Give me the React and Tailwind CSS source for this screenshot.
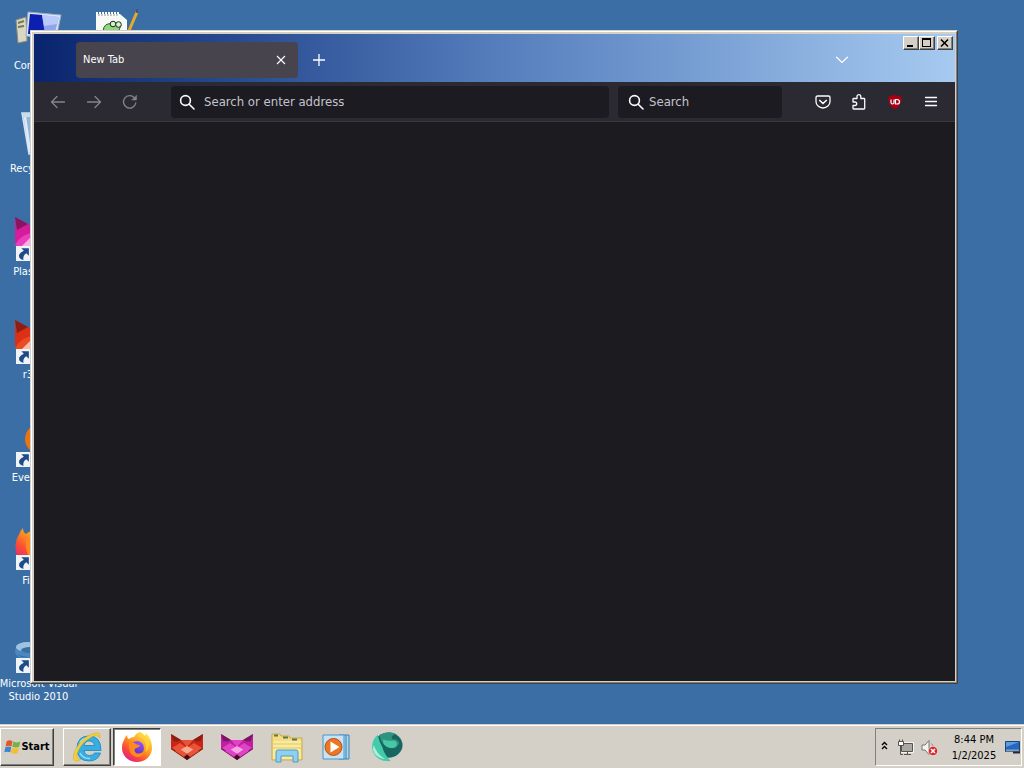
import React from "react";

const raised = "border border-t-white border-l-white border-r-[#404040] border-b-[#404040] shadow-[inset_-1px_-1px_0_#808080]";

function ComputerIcon() {
  return (
    <svg viewBox="0 0 48 48" className="size-12" aria-hidden="true">
      <path d="M2 13 L12 10 L13 34 L4 36 Z" fill="#d9d6c4" stroke="#8d8b78" />
      <path d="M4 16 L10 14 M4 20 L10 19" stroke="#6f7d52" strokeWidth="2" />
      <path d="M14 5 L47 8 L42 32 L12 29 Z" fill="#dbe4f2" stroke="#9aa9c4" />
      <path d="M16 7 L45 10 L40 29 L14 27 Z" fill="#8fa6ee" />
      <path d="M16 7 L28 8 L31 28 L14 27 Z" fill="#0b1fb0" />
      <path d="M28 8 L45 10 L43 17 L30 19 Z" fill="#b9c9fa" />
    </svg>
  );
}

function RecycleIcon() {
  return (
    <svg viewBox="0 0 48 48" className="size-12" aria-hidden="true">
      <path d="M8 3 L40 3 L34 44 L15 44 Z" fill="#8fb5d8" stroke="#d3e4f2" strokeWidth="1.500" />
      <path d="M11 7 L16 42" stroke="#dcebf7" strokeWidth="2.500" />
      <path d="M20 6 L21 42" stroke="#b9d3ea" strokeWidth="2" />
      <path d="M8 3 L40 3 L39 7 L9 7 Z" fill="#c8dced" />
    </svg>
  );
}

function NotepadIcon() {
  return (
    <svg viewBox="0 0 48 48" className="size-12" aria-hidden="true">
      <path d="M6 7 H30 L37 13 V46 H6 Z" fill="#f7faf5" />
      <path d="M7 5 V9 M10 5 V9 M13 5 V9 M16 5 V9 M19 5 V9 M22 5 V9 M25 5 V9 M28 5 V9" stroke="#fff" strokeWidth="2" />
      <path d="M9 7 V9 M12 7 V9 M15 7 V9 M18 7 V9 M21 7 V9 M24 7 V9 M27 7 V9" stroke="#8a9396" />
      <path d="M13 24 Q14 15 23 17 L31 18 L28 26 Z" fill="#8fd67c" stroke="#315c2b" />
      <circle cx="23" cy="17" r="2.800" fill="#d8f0d2" stroke="#1d2b1c" />
      <circle cx="28.500" cy="17.500" r="2.800" fill="#d8f0d2" stroke="#1d2b1c" />
      <path d="M47 5 L38 26" stroke="#e7a92c" strokeWidth="3" />
      <path d="M48 2.500 L47 6" stroke="#4b5268" strokeWidth="3" />
    </svg>
  );
}

function FoxFace({ dark, main, light, pale, className }) {
  return (
    <svg viewBox="0 0 32 26" className={className} preserveAspectRatio="none" aria-hidden="true">
      <path d="M0 0 L10 6 H22 L32 0 V15 L16 26 L0 15 Z" fill={main} />
      <path d="M0 0 L10 6 L3 9 Z M32 0 L22 6 L29 9 Z" fill={dark} />
      <path d="M0 8 L5 7 L16 15 L27 7 L32 8 V15 L16 20 L0 15 Z" fill={main} />
      <path d="M10 6 H22 L16 13 Z" fill={light} />
      <path d="M0 15 L9 11 L16 16 L23 11 L32 15 L16 26 Z" fill={dark} />
      <path d="M1 14 L9 9 L16 14 L8 19 Z M31 14 L23 9 L16 14 L24 19 Z" fill={light} />
      <path d="M9 16 L16 12 L23 16 L16 20 Z" fill={pale} />
      <path d="M4 17 L9 15 L16 20 L23 15 L28 17 L19 23 L16 20 L13 23 Z" fill={light} />
      <path d="M13 23 L16 21 L19 23 L16 26 Z" fill="#3a1015" />
    </svg>
  );
}

function RedFox({ className }) {
  return <FoxFace dark="#8e1d12" main="#c92617" light="#e8543a" pale="#fba98c" className={className} />;
}

function PinkFox({ className }) {
  return <FoxFace dark="#7d1566" main="#c01fa0" light="#e044c6" pale="#f9a3e6" className={className} />;
}

function FoxTile({ dark, main, light, pale }) {
  return (
    <svg viewBox="0 0 48 48" className="size-12" aria-hidden="true">
      <path d="M1 4 L17 13 H31 L47 4 V30 L24 46 L1 30 Z" fill={main} />
      <path d="M1 4 L14 11 L3 17 Z M47 4 L34 11 L45 17 Z" fill={dark} />
      <path d="M1 32 Q8 20 20 20 L24 40 Z" fill={light} />
      <path d="M8 33 L18 23 L28 30 L18 36 Z" fill={pale} />
    </svg>
  );
}

function EverythingIcon() {
  return (
    <svg viewBox="0 0 48 48" className="size-12" aria-hidden="true">
      <circle cx="26" cy="20" r="11" fill="#ffd9a8" stroke="#e8750f" strokeWidth="8" />
      <path d="M33 29 L44 42" stroke="#f07c12" strokeWidth="7" />
    </svg>
  );
}

function FirefoxIcon({ id, className }) {
  return (
    <svg viewBox="0 0 32 32" className={className} aria-hidden="true">
      <defs>
        <linearGradient id={id + "a"} x1="0.8" y1="0.1" x2="0.2" y2="0.9">
          <stop offset="0" stopColor="#ffe14a" />
          <stop offset="0.45" stopColor="#ff9320" />
          <stop offset="0.75" stopColor="#fb4a35" />
          <stop offset="1" stopColor="#e5257f" />
        </linearGradient>
        <linearGradient id={id + "b"} x1="0.7" y1="0" x2="0.3" y2="1">
          <stop offset="0" stopColor="#9059ff" />
          <stop offset="1" stopColor="#5b2bbd" />
        </linearGradient>
      </defs>
      <path d="M3 9 Q4 6 6 4 Q6 7 8 8 Q10 6 13 6 Q15 2 19 1 Q19 4 23 6 Q25 4 25 2 Q31 8 31 17 A15 14 0 0 1 1 17 Q1 12 3 9 Z" fill={`url(#${id}a)`} />
      <circle cx="16" cy="17" r="7" fill={`url(#${id}b)`} />
      <path d="M8 12 Q12 10 15 13 Q17 14 19 14 Q18 17 15 17 Q12 19 15 22 Q20 24 24 19 Q22 27 15 26 Q7 24 8 12 Z" fill="#ff8a22" />
      <path d="M17 5 Q24 7 25 14 Q26 18 24 21 Q29 18 28 11 Q25 4 19 1 Z" fill="#ffd43a" />
    </svg>
  );
}

function StudioIcon() {
  return (
    <svg viewBox="0 0 48 48" className="size-12" aria-hidden="true">
      <ellipse cx="14" cy="26" rx="13" ry="9" fill="#4c88bd" />
      <ellipse cx="14" cy="22" rx="12" ry="5" fill="#9cc4e2" />
      <ellipse cx="16" cy="25" rx="9" ry="3" fill="#3a709f" />
      <path d="M3 30 Q14 36 26 28 L46 14 V36 L24 34 Z" fill="#2f6da6" />
    </svg>
  );
}

function Shortcut() {
  return (
    <svg viewBox="0 0 14 14" className="absolute bottom-0 left-0.5 size-[15px]" aria-hidden="true">
      <rect width="14" height="14" fill="#eef3f8" />
      <path d="M5 2 H12 V9 L9.600 6.700 Q6 9 7 13 Q2 12 3 8 Q4 6 7.300 4.400 Z" fill="#1e4a86" />
    </svg>
  );
}

function DesktopIcon({ label, shortcut, name, children }) {
  return (
    <button type="button" aria-label={name} className="flex h-[103px] w-[76px] flex-col items-center gap-1 pt-[7px]">
      <span className="relative block size-12 shrink-0">
        {children}
        {shortcut && <Shortcut />}
      </span>
      {label && <span className="ml-px w-[78px] text-center leading-[13px] text-white">{label}</span>}
    </button>
  );
}

function NavButton({ label, className = "text-[#fbfbfe]", children }) {
  return (
    <button type="button" aria-label={label} className={`flex h-9 w-9 shrink-0 items-center justify-center ${className}`}>
      {children}
    </button>
  );
}

function Glyph({ children }) {
  return (
    <svg viewBox="0 0 16 16" className="size-4" fill="none" stroke="currentColor" strokeWidth="1.300" strokeLinecap="round" strokeLinejoin="round" aria-hidden="true">
      {children}
    </svg>
  );
}

function SearchField({ id, label, className }) {
  return (
    <div className={`flex h-8 items-center rounded bg-[#1c1b22] text-[#fbfbfe] ${className}`}>
      <label htmlFor={id} aria-label={label} className="shrink-0">
        <svg viewBox="0 0 16 16" className="size-4" fill="none" stroke="currentColor" strokeWidth="1.600" strokeLinecap="round" aria-hidden="true">
          <circle cx="6.500" cy="6.500" r="4.900" />
          <path d="M10.200 10.200 L15 15" />
        </svg>
      </label>
      <input id={id} type="text" placeholder={label} className="h-6 w-full min-w-0 bg-transparent text-[13px] leading-6 text-white outline-none placeholder:text-[#c4c4ca]" />
    </div>
  );
}

function CaptionButton({ label, className = "", children }) {
  return (
    <button type="button" aria-label={label} className={`flex h-3.5 w-4 items-center justify-center bg-[#d4d0c8] ${raised} ${className}`}>
      <svg viewBox="0 0 12 10" className="h-2.5 w-3" fill="none" stroke="#000" shapeRendering="crispEdges" aria-hidden="true">
        {children}
      </svg>
    </button>
  );
}

function BrowserWindow() {
  return (
    <section aria-label="Browser" className="absolute top-[30px] right-[66px] bottom-10 left-[30px] flex flex-col border border-t-[#d4d0c8] border-r-[#404040] border-b-[#404040] border-l-[#d4d0c8] bg-[#d4d0c8]">
      <div className="flex min-h-0 grow flex-col border border-t-white border-r-[#808080] border-b-[#808080] border-l-white p-0.5 pr-px pb-px">
        <header className="flex h-12 shrink-0 items-start bg-linear-to-r from-[#0a246e] via-[#557dbc] to-[#a6caf0] pl-[42px]">
          <div className="mt-2 flex h-9 w-[222px] items-center justify-between rounded bg-[#48444e] pr-[9px] pl-[7px] text-white">
            <span>New Tab</span>
            <button type="button" aria-label="Close tab" className="flex size-4 items-center justify-center">
              <svg viewBox="0 0 10 10" className="size-2.5" stroke="currentColor" strokeWidth="1.100" aria-hidden="true">
                <path d="M1 1 L9 9 M9 1 L1 9" />
              </svg>
            </button>
          </div>
          <button type="button" aria-label="Open a new tab" className="mt-2 ml-[3px] flex size-9 items-center justify-center text-white">
            <svg viewBox="0 0 12 12" className="size-3" stroke="currentColor" strokeWidth="1.300" aria-hidden="true">
              <path d="M6 0 V12 M0 6 H12" />
            </svg>
          </button>
          <button type="button" aria-label="List all tabs" className="mt-2 ml-auto flex size-9 items-center justify-center text-white">
            <svg viewBox="0 0 12 8" className="h-2 w-3" fill="none" stroke="currentColor" strokeWidth="1.200" strokeLinecap="round" aria-hidden="true">
              <path d="M0.600 1.200 L6 6.500 L11.400 1.200" />
            </svg>
          </button>
          <div className="mt-0.5 mr-0.5 ml-[43px] flex">
            <CaptionButton label="Minimize"><path d="M2 8 H8" strokeWidth="2" /></CaptionButton>
            <CaptionButton label="Maximize"><path d="M1 1 H10" strokeWidth="2" /><path d="M1.500 1 V8.500 H9.500 V1" /></CaptionButton>
            <CaptionButton label="Close" className="ml-0.5">
              <path d="M2 1.500 L9 8.500 M9 1.500 L2 8.500" strokeWidth="1.600" shapeRendering="auto" />
            </CaptionButton>
          </div>
        </header>
        <nav aria-label="Navigation" className="flex h-10 shrink-0 items-center border-b border-[#3a3942] bg-[#2b2a33] px-1.5">
          <NavButton label="Back" className="text-[#85848b]"><Glyph><path d="M14.500 8 H1.500 M7 2.500 L1.500 8 L7 13.500" /></Glyph></NavButton>
          <NavButton label="Forward" className="text-[#85848b]"><Glyph><path d="M1.500 8 H14.500 M9 2.500 L14.500 8 L9 13.500" /></Glyph></NavButton>
          <NavButton label="Reload" className="text-[#85848b]">
            <Glyph><path d="M13.800 9 A6.200 6.200 0 1 1 12.400 3.800" /><path d="M14.500 1.500 V6 H10 Z" fill="currentColor" strokeWidth="0.500" /></Glyph>
          </NavButton>
          <div className="mx-[23px] flex min-w-0 grow gap-[9px]">
            <SearchField id="address" label="Search or enter address" className="min-w-0 grow gap-[9px] pl-2" />
            <SearchField id="search" label="Search" className="w-[164px] gap-[5px] pl-2.5" />
          </div>
          <NavButton label="Save to Pocket">
            <Glyph><path d="M2.500 2 H13.500 Q15 2 15 3.500 V7.500 A7 6.500 0 0 1 1 7.500 V3.500 Q1 2 2.500 2 Z" /><path d="M4.800 6.500 L8 9.500 L11.200 6.500" strokeWidth="1.700" /></Glyph>
          </NavButton>
          <NavButton label="Extensions">
            <Glyph><path d="M2 5.200 Q2 4.500 2.700 4.500 H6 V2.600 A1.900 1.900 0 0 1 9.800 2.600 V4.500 H13 Q13.700 4.500 13.700 5.200 V14.300 Q13.700 15 13 15 H2.700 Q2 15 2 14.300 V11.500 H4 A1.700 1.700 0 0 0 4 8 H2 Z" /></Glyph>
          </NavButton>
          <NavButton label="uBlock Origin">
            <svg viewBox="0 0 16 16" className="size-4" aria-hidden="true">
              <path d="M8 0.500 Q11 2.300 14.500 2.500 Q15.500 11 8 15.500 Q0.500 11 1.500 2.500 Q5 2.300 8 0.500 Z" fill="#a80012" />
              <path d="M4 5.500 V8.500 Q4 10 5.500 10 Q7 10 7 8.500 V5.500 M8.500 5.500 H10 Q12.500 5.500 12.500 7.700 Q12.500 10 10 10 H8.500 Z" fill="none" stroke="#fff" strokeWidth="1.200" />
            </svg>
          </NavButton>
          <NavButton label="Open application menu"><Glyph><path d="M2.500 3.500 H13.500 M2.500 7.500 H13.500 M2.500 11.500 H13.500" /></Glyph></NavButton>
        </nav>
        <main className="grow bg-[#1c1b1f]" />
      </div>
    </section>
  );
}

function WindowsFlag() {
  return (
    <svg viewBox="0 0 16 14" className="h-4 w-[17px]" aria-hidden="true">
      <path d="M2.500 1.500 Q5 0 8 1.500 L7 6.500 Q4 5 1.500 6.500 Z" fill="#e8542a" />
      <path d="M8.800 1.800 Q12 3.500 15.300 1.800 L14.300 6.800 Q11 8.200 7.800 6.800 Z" fill="#74b343" />
      <path d="M1.300 7.300 Q4 5.800 6.800 7.300 L5.900 12 Q3 10.800 0.300 12 Z" fill="#3b85cf" />
      <path d="M7.600 7.700 Q11 9.200 14.100 7.700 L13 12.700 Q10 14 6.600 12.400 Z" fill="#f4be2c" />
    </svg>
  );
}

function ExplorerE() {
  return (
    <svg viewBox="0 0 32 32" className="size-8" aria-hidden="true">
      <path d="M30 19.500 H13 Q14 24.500 18.500 24.500 Q22 24.500 23.500 22 H29.500 Q27 30 18 30 Q6 30 6 17.500 Q6 5 18 5 Q30 5 30 19.500 Z M13 14.500 H23.500 Q22.500 10 18 10 Q14 10 13 14.500 Z" fill="#36aee4" fillRule="evenodd" stroke="#1c85bd" strokeWidth="0.800" />
      <path d="M9 12 Q12 7 18 7" fill="none" stroke="#a7e4fa" strokeWidth="2" />
      <path d="M9 22 Q12 28 19 27.500" fill="none" stroke="#8fdcf8" strokeWidth="1.600" />
      <path d="M29 7 Q30 1 24 2 Q15 4 8 13 Q1 23 2.500 28 Q4 32 10 28.500 Q5 28.500 6 23 Q9 13 18 7.500 Q26 2 29 7 Z" fill="#f4cf3d" stroke="#d3a722" strokeWidth="0.500" />
    </svg>
  );
}

function FolderIcon() {
  return (
    <svg viewBox="0 0 32 32" className="size-8" aria-hidden="true">
      <path d="M1 3 H9 L10 5 H18 L19 7 H31 V29 H1 Z" fill="#f4dc83" stroke="#c9ab45" />
      <path d="M2 10 H30 V28 H2 Z" fill="#f9ea9f" />
      <path d="M3 4.500 H7 M12 6.500 H17 M21 8.500 H26" stroke="#59784b" strokeWidth="2" />
      <path d="M2 13 H30 M2 17 H30" stroke="#e3c866" />
      <path d="M5 31 V21 Q5 19 7 19 H25 Q27 19 27 21 V31 H22 V25 H10 V31 Z" fill="#90cfee" stroke="#4c9cc9" />
    </svg>
  );
}

function MediaIcon() {
  return (
    <svg viewBox="0 0 32 32" className="size-8" aria-hidden="true">
      <path d="M18 4 H28 V28 H18 Z" fill="#a9d5ef" stroke="#3a81b5" />
      <path d="M25 4 V28" stroke="#3a81b5" />
      <path d="M2 4 H23 V28 H2 Z" fill="#c5e3f5" stroke="#4a94c6" />
      <circle cx="12.500" cy="16" r="8.500" fill="#ec7621" stroke="#bd5012" />
      <path d="M9.500 10.500 L18.500 16 L9.500 21.500 Z" fill="#fff" />
    </svg>
  );
}

function GlobeIcon() {
  return (
    <svg viewBox="0 0 34 34" className="size-8" aria-hidden="true">
      <ellipse cx="18.500" cy="15" rx="15" ry="13.500" fill="#16675f" />
      <path d="M9 5 Q18 -1 26 3 Q20 6 23 9 Q28 8 30 13 Q27 20 20 18 Q11 15 9 5 Z" fill="#2f947f" />
      <path d="M13 9 Q18 11 24 10 Q30 12 26 17 Q22 19 17 17 Q12 14 13 9 Z" fill="#49c7a4" />
      <path d="M7 4 Q9 12 12 17 Q14 25 21 32 Q7 33 2 22 Q-1 11 7 4 Z" fill="#45cba9" />
      <path d="M3 15 Q6 25 15 30 Q5 29 2 20 Z" fill="#a9f0dc" />
    </svg>
  );
}

function TaskButton({ label, className = "", children }) {
  return (
    <button type="button" aria-label={label} className={`flex h-[38px] w-12 shrink-0 items-center justify-center ${className}`}>
      {children}
    </button>
  );
}

function Taskbar() {
  return (
    <footer className="flex h-11 shrink-0 items-center border-t border-[#d4d0c8] bg-[#d4d0c8] pt-px pr-0.5 text-black shadow-[inset_0_1px_0_#fff]">
      <button type="button" className={`flex h-[38px] w-[54px] items-center justify-center font-bold ${raised}`}>
        <WindowsFlag />
        <span>Start</span>
      </button>
      <div className="ml-[9px] flex grow gap-0.5">
        <TaskButton label="Internet Explorer" className={raised}><ExplorerE /></TaskButton>
        <TaskButton label="Firefox" className="border border-t-[#404040] border-r-white border-b-white border-l-[#404040] bg-white shadow-[inset_1px_1px_0_#808080]">
          <FirefoxIcon id="task" className="size-8" />
        </TaskButton>
        <TaskButton label="r3dfox"><RedFox className="h-[26px] w-8" /></TaskButton>
        <TaskButton label="Plasmafox"><PinkFox className="h-[26px] w-8" /></TaskButton>
        <TaskButton label="Windows Explorer"><FolderIcon /></TaskButton>
        <TaskButton label="Media Player"><MediaIcon /></TaskButton>
        <TaskButton label="Web globe"><GlobeIcon /></TaskButton>
      </div>
      <div className="flex h-[38px] items-center border border-t-[#808080] border-r-white border-b-white border-l-[#808080] pl-[3px]">
        <button type="button" aria-label="Show hidden icons" className="flex h-4 w-2.5 items-center justify-center pb-1">
          <svg viewBox="0 0 7 9" className="h-[9px] w-[7px]" fill="none" stroke="#000" strokeWidth="1.400" aria-hidden="true">
            <path d="M1 4 L3.500 1.500 L6 4 M1 8 L3.500 5.500 L6 8" />
          </svg>
        </button>
        <button type="button" aria-label="Network" className="ml-2">
          <svg viewBox="0 0 17 17" className="size-[17px]" aria-hidden="true">
            <path d="M4.500 4.500 H15.500 V12.500 H4.500 Z" fill="#b9b7b0" stroke="#fff" strokeWidth="2.500" />
            <path d="M4.500 4.500 H15.500 V12.500 H4.500 Z" fill="#aaa8a2" stroke="#55534e" />
            <path d="M7 15.500 H14 M10.500 13 V15" stroke="#55534e" />
            <path d="M1.500 2.500 H6.500 V6.500 H1.500 Z" fill="#fff" stroke="#55534e" />
            <path d="M2.500 0.500 V2 M5.500 0.500 V2 M3.500 7 V15.500 H6" fill="none" stroke="#55534e" />
          </svg>
        </button>
        <button type="button" aria-label="Volume" className="ml-[7px]">
          <svg viewBox="0 0 17 17" className="size-[17px]" aria-hidden="true">
            <path d="M1 6 H4 L8 1.500 V15.500 L4 11 H1 Z" fill="#f4f3f0" stroke="#777" />
            <path d="M10.500 4.500 Q12 6 12 8" fill="none" stroke="#888" />
            <circle cx="12" cy="12" r="4.700" fill="#d22a2f" stroke="#fff" strokeWidth="0.600" />
            <path d="M10 10 L14 14 M14 10 L10 14" stroke="#fff" strokeWidth="1.500" />
          </svg>
        </button>
        <div className="ml-[11px] flex w-[50px] flex-col items-center gap-[3px] leading-[13px] whitespace-nowrap">
          <span>8:44 PM</span>
          <span>1/2/2025</span>
        </div>
        <button type="button" aria-label="Show desktop" className="ml-[5px]">
          <svg viewBox="0 0 17 14" className="h-3.5 w-[17px]" aria-hidden="true">
            <path d="M1.500 1.500 H15.500 V11.500 H1.500 Z" fill="#2469bf" stroke="#164478" />
            <path d="M2 2 H15 L2 7 Z" fill="#5e9be0" />
            <path d="M2 10.500 H15" stroke="#8a9fb9" strokeWidth="2" />
            <path d="M9 12.500 H16" stroke="#202a3a" strokeWidth="2" />
          </svg>
        </button>
      </div>
    </footer>
  );
}

export default function App() {
  return (
    <div className="flex h-screen flex-col overflow-hidden bg-[#3a6ea5] font-['DejaVu_Sans_Condensed','DejaVu_Sans',sans-serif] text-[11px]">
      <div className="relative flex min-h-0 grow items-start">
        <div className="flex flex-col">
          <DesktopIcon label="Computer"><ComputerIcon /></DesktopIcon>
          <DesktopIcon label="Recycle Bin"><RecycleIcon /></DesktopIcon>
          <DesktopIcon label="Plasmafox" shortcut><FoxTile dark="#8a145e" main="#d51d9c" light="#ea3fbc" pale="#fbb0e4" /></DesktopIcon>
          <DesktopIcon label="r3dfox" shortcut><FoxTile dark="#8e1d12" main="#d93016" light="#e94c25" pale="#fcbfa4" /></DesktopIcon>
          <DesktopIcon label="Everything" shortcut><EverythingIcon /></DesktopIcon>
          <DesktopIcon label="Firefox" shortcut><FirefoxIcon id="desk" className="size-12" /></DesktopIcon>
          <DesktopIcon label="Microsoft Visual Studio 2010" shortcut><StudioIcon /></DesktopIcon>
        </div>
        <DesktopIcon name="Notepad++"><NotepadIcon /></DesktopIcon>
        <BrowserWindow />
      </div>
      <Taskbar />
    </div>
  );
}
